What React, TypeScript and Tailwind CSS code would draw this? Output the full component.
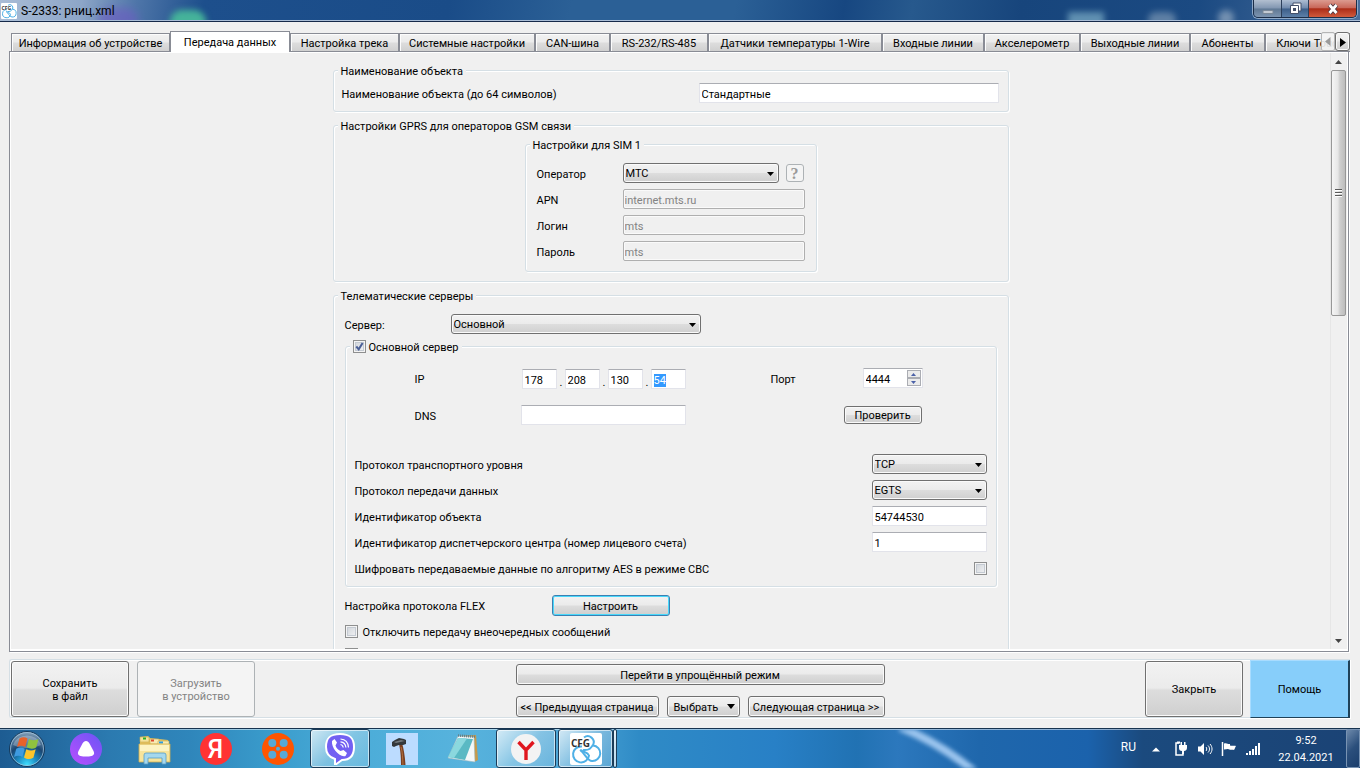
import { useEffect, useRef, type ReactNode } from "react";

const tabs = [
  { label: "Информация об устройстве", width: "w-[159px]" },
  { label: "Передача данных", width: "w-[120px]", active: true },
  { label: "Настройка трека", width: "w-[109px]" },
  { label: "Системные настройки", width: "w-[136px]" },
  { label: "CAN-шина", width: "w-[75px]" },
  { label: "RS-232/RS-485", width: "w-[98px]" },
  { label: "Датчики температуры 1-Wire", width: "w-[174px]" },
  { label: "Входные линии", width: "w-[102px]" },
  { label: "Акселерометр", width: "w-[96px]" },
  { label: "Выходные линии", width: "w-[110px]" },
  { label: "Абоненты", width: "w-[75px]" },
  { label: "Ключи Touch", width: "w-[90px]" },
];

const face =
  "border border-[#707070] rounded-[3px] bg-[linear-gradient(#f2f2f2,#ebebeb_48%,#dddddd_52%,#cfcfcf)] pt-[2px] shadow-[inset_0_0_0_1px_#fafafa]";
const field =
  "h-5 min-w-0 rounded-[1px] border border-[#e2e3ea] border-t-[#abadb3] bg-white px-[2px] pt-[2px] outline-none selection:bg-[#3399ff] selection:text-white";
const group =
  "min-w-0 rounded-[3px] border border-[#d5dfe5] shadow-[1px_1px_0_#fff,inset_1px_1px_0_#fff]";

function Group({ title, className, children }: { title: ReactNode; className: string; children: ReactNode }) {
  return (
    <fieldset className={`${group} ${className}`}>
      <legend className="ml-1 flex h-[14px] items-center bg-[#f0f0f0] px-[3px] leading-[14px]">
        {typeof title === "string" ? <span className="pt-[3px]">{title}</span> : title}
      </legend>
      {children}
    </fieldset>
  );
}

function Select({ id, value, className }: { id: string; value: string; className: string }) {
  return (
    <div className={`relative ${className}`}>
      <select id={id} className={`block h-5 w-full appearance-none pl-[2px] outline-none ${face}`}>
        <option>{value}</option>
      </select>
      <svg className="pointer-events-none absolute top-[9px] right-[5px] h-1 w-[7px]" viewBox="0 0 7 4">
        <path d="M0 0h7L3.500 4z" fill="#000" />
      </svg>
    </div>
  );
}

function Check({ id, checked }: { id: string; checked?: boolean }) {
  return (
    <span className="relative block size-[13px] shrink-0">
      <input
        id={id}
        type="checkbox"
        defaultChecked={checked}
        className="block size-[13px] appearance-none border border-[#8e8f8f] bg-[linear-gradient(135deg,#cdd2d8,#f4f4f5)] shadow-[inset_0_0_0_1px_#f4f4f4,inset_0_0_0_2px_#c4cad2]"
      />
      {checked && (
        <svg className="pointer-events-none absolute inset-0" viewBox="0 0 13 13">
          <path d="M3.300 6.500 5.700 9.300 9.600 2.900" fill="none" stroke="#4a5f97" strokeWidth="2" />
        </svg>
      )}
    </span>
  );
}

function Server() {
  const lastOctet = useRef<HTMLInputElement>(null);
  useEffect(() => {
    lastOctet.current?.focus();
    lastOctet.current?.select();
  }, []);
  return (
    <Group
      className="mx-[11px] mt-[5px]"
      title={
        <>
          <Check id="main-server" checked />
          <label htmlFor="main-server" className="ml-[3px]">Основной сервер</label>
        </>
      }
    >
      <div className="pr-[9px] pb-2 pl-[9px]">
        <div className="mt-[15px] flex items-center pl-[60px]">
          <span className="w-[107px] pt-[3px]">IP</span>
          <div className="flex items-end pt-px">
            {["178", "208", "130", "54"].map((octet, i) => (
              <div key={i} className="flex items-end">
                <input
                  ref={i === 3 ? lastOctet : undefined}
                  aria-label={`Октет ${i + 1}`}
                  defaultValue={octet}
                  className={`w-[35px] ${field}`}
                />
                {i < 3 && <span className="w-2 pl-[3px] leading-3">.</span>}
              </div>
            ))}
          </div>
          <label htmlFor="port" className="ml-[85px] w-[92px]">Порт</label>
          <div className="relative self-start">
            <input id="port" defaultValue="4444" className={`block w-[60px] ${field}`} />
            <div className="absolute top-[2px] right-[2px] flex flex-col">
              <button aria-label="Увеличить" className="grid h-2 w-[14px] place-items-center border border-[#abadb3] bg-[#ebebeb]">
                <svg width="5" height="3" viewBox="0 0 5 3"><path d="M0 3h5L2.500 0z" fill="#4b61a8" /></svg>
              </button>
              <button aria-label="Уменьшить" className="grid h-2 w-[14px] place-items-center border border-[#abadb3] bg-[#ebebeb]">
                <svg width="5" height="3" viewBox="0 0 5 3"><path d="M0 0h5L2.500 3z" fill="#4b61a8" /></svg>
              </button>
            </div>
          </div>
        </div>
        <div className="mt-4 flex items-center pl-[60px]">
          <label htmlFor="dns" className="w-[106px]">DNS</label>
          <input id="dns" className={`w-[165px] ${field}`} />
          <button className={`ml-[158px] h-[18px] w-[78px] leading-[14px] ${face}`}>Проверить</button>
        </div>
        <div className="mt-[29px] flex flex-col gap-[6px]">
          <div className="flex items-center justify-between">
            <label htmlFor="transport">Протокол транспортного уровня</label>
            <Select id="transport" value="TCP" className="w-[115px]" />
          </div>
          <div className="flex items-center justify-between">
            <label htmlFor="data-protocol">Протокол передачи данных</label>
            <Select id="data-protocol" value="EGTS" className="w-[115px]" />
          </div>
          <div className="flex items-center justify-between">
            <label htmlFor="object-id">Идентификатор объекта</label>
            <input id="object-id" defaultValue="54744530" className={`w-[115px] ${field}`} />
          </div>
          <div className="flex items-center justify-between">
            <label htmlFor="center-id">Идентификатор диспетчерского центра (номер лицевого счета)</label>
            <input id="center-id" defaultValue="1" className={`w-[115px] ${field}`} />
          </div>
          <div className="flex h-5 items-center justify-between">
            <label htmlFor="aes">Шифровать передаваемые данные по алгоритму AES в режиме CBC</label>
            <Check id="aes" />
          </div>
        </div>
      </div>
    </Group>
  );
}

function TitleBar() {
  return (
    <header className="relative flex h-[22px] shrink-0 items-center overflow-hidden border-b border-[#16294a] bg-[linear-gradient(100deg,#a9bcd6_0,#8da6c8_6%,#4f76a9_10%,#1d4f8c_15%,#1a4c88_33%,#2b6096_42%,#2b6096_54%,#174781_62%,#27598d_67%,#17457c_75%,#1b4a82_88%,#4a6f9c_100%)] pl-px">
      <span className="absolute top-2 left-[98px] h-6 w-10 rounded-full bg-[#6a5fc0] opacity-70 blur-[4px]" />
      <span className="absolute top-[10px] left-[170px] h-6 w-9 rounded-full bg-[#45b39a] blur-[3px]" />
      <span className="absolute top-3 left-[1068px] h-4 w-9 bg-[#7fb0c8] opacity-70 blur-[3px]" />
      <span className="absolute top-3 left-[1148px] h-4 w-7 rounded-full bg-[#8ba4bd] opacity-60 blur-[3px]" />
      <span className="absolute top-[10px] left-[1218px] h-4 w-4 rounded-full bg-[#a9bbcd] opacity-60 blur-[3px]" />
      <svg className="relative size-4 rounded-[1px] bg-white" viewBox="0 0 32 32"><CfgMark /></svg>
      <h1 className="relative ml-1 text-[12px] leading-4 text-black">S-2333: рниц.xml</h1>
      <div className="relative ml-auto mr-[3px] flex h-[18px] self-start overflow-hidden rounded-b-[5px] border border-t-0 border-[#1c2e48] shadow-[0_0_0_1px_#8fa9c8]">
        <button aria-label="Свернуть" className="grid w-7 place-items-center border-r border-[#2c3f5b] bg-[linear-gradient(#b2bfd0,#8196b1_48%,#5f7894_52%,#7d94b0)]">
          <svg width="12" height="14" viewBox="0 0 12 14"><path d="M1 8.500h10v3H1z" fill="#c3cad3" stroke="#7b8898" /></svg>
        </button>
        <button aria-label="Восстановить" className="grid w-[27px] place-items-center border-r border-[#2c3f5b] bg-[linear-gradient(#aebed3,#6f89ac_48%,#3c5e89_52%,#5c7fa8)]">
          <svg width="13" height="13" viewBox="0 0 13 13">
            <path d="M4 1h8v8H4z" fill="#fff" stroke="#44506a" />
            <path d="M1.500 3.500h8v8h-8z" fill="#fff" stroke="#44506a" />
            <path d="M4 6h3v3H4z" fill="#44506a" />
          </svg>
        </button>
        <button aria-label="Закрыть окно" className="grid w-[47px] place-items-center bg-[linear-gradient(#dc9b90,#c9685a_45%,#ac2d18_52%,#d15a3c)]">
          <svg width="14" height="12" viewBox="0 0 14 12">
            <path d="M3.500 2l7 8m0-8l-7 8" stroke="#4c3742" strokeWidth="4.600" />
            <path d="M3.500 2l7 8m0-8l-7 8" stroke="#fff" strokeWidth="2.800" />
          </svg>
        </button>
      </div>
      <span className="absolute inset-x-0 bottom-0 h-px bg-[#a9bdd6]" />
    </header>
  );
}

function CfgMark() {
  return (
    <>
      <g fill="none" stroke="#4fb0e6" strokeWidth="2">
        <path d="M14 4.500a6 6 0 019 7.500M23 12.500a6 6 0 11-1 15.500c-5 0-7-8-12-11" />
        <path d="M12 13.500a8 8 0 107 9c-1.500-4-7-3-8-6" />
        <path d="M23 11.500c-2 5-6 6-10 5.500" />
      </g>
      <text x="1" y="14" fontSize="10" fontWeight="bold" fill="#333" fontFamily="Open Sans, sans-serif">CFG</text>
    </>
  );
}

function Tabs() {
  return (
    <div className="relative z-10 -mb-px flex h-[21px] shrink-0">
      <div role="tablist" className="flex min-w-0 flex-1 items-end overflow-hidden pl-[2px]">
        {tabs.map((t) =>
          t.active ? (
            <button key={t.label} role="tab" aria-selected className={`h-[21px] shrink-0 border border-b-0 border-[#898c95] bg-white pt-px whitespace-nowrap ${t.width}`}>
              {t.label}
            </button>
          ) : (
            <button key={t.label} role="tab" className={`h-[19px] shrink-0 border border-[#898c95] bg-[linear-gradient(#f2f2f2,#ebebeb_48%,#dddddd_52%,#d0d0d0)] pt-[2px] whitespace-nowrap shadow-[inset_1px_1px_0_#fcfcfc] ${t.width}`}>
              {t.label}
            </button>
          ),
        )}
      </div>
      <div className="absolute top-px right-0 flex h-[19px]">
        <button aria-label="Вкладки влево" disabled className="grid w-[14px] place-items-center rounded-[2px] border border-[#b5b5b5] bg-[#f4f4f4]/90">
          <svg width="6" height="9" viewBox="0 0 6 9"><path d="M5.500 0v9L0 4.500z" fill="#9b9b9b" /></svg>
        </button>
        <button aria-label="Вкладки вправо" className={`grid w-[15px] place-items-center ${face}`}>
          <svg width="6" height="9" viewBox="0 0 6 9"><path d="M0 0v9l6-4.500z" fill="#000" /></svg>
        </button>
      </div>
    </div>
  );
}

function ScrollBar() {
  return (
    <div className="flex w-[17px] shrink-0 flex-col items-center border-l border-[#e6e6e6] bg-[#f0f0f0] pr-px">
      <button aria-label="Прокрутить вверх" className="grid h-[17px] w-full place-items-center">
        <svg width="7" height="4" viewBox="0 0 7 4"><path d="M0 4h7L3.500 0z" fill="#444" /></svg>
      </button>
      <div className="grid h-[246px] w-[15px] place-items-center rounded-[2px] border border-[#979797] bg-[linear-gradient(90deg,#f5f5f5,#e6e6e6_45%,#cfcfcf_60%,#bdbdbd)]">
        <svg width="7" height="8" viewBox="0 0 7 8">
          <path d="M0 .5h7M0 3.500h7M0 6.500h7" stroke="#5a5a5a" />
          <path d="M0 1.500h7M0 4.500h7M0 7.500h7" stroke="#fff" />
        </svg>
      </div>
      <button aria-label="Прокрутить вниз" className="mt-auto grid h-[17px] w-full place-items-center">
        <svg width="7" height="4" viewBox="0 0 7 4"><path d="M0 0h7L3.500 4z" fill="#444" /></svg>
      </button>
    </div>
  );
}

function SettingsPane() {
  return (
    <div className="mr-px flex min-h-0 flex-1 border border-[#898c95] shadow-[1px_1px_0_#fff]">
      <div className="flex min-h-0 flex-1 border border-b-2 border-white">
        <div className="min-w-0 flex-1 overflow-hidden">
          <div className="mx-auto mt-[10px] max-w-[676px] [&_label]:pt-[3px]">
            <Group title="Наименование объекта" className="">
              <div className="mt-[6px] flex items-center justify-between pr-[9px] pb-2 pl-2">
                <label htmlFor="object-name">Наименование объекта (до 64 символов)</label>
                <input id="object-name" defaultValue="Стандартные" className={`w-[300px] ${field}`} />
              </div>
            </Group>

            <Group title="Настройки GPRS для операторов GSM связи" className="mt-[6px] pb-[9px]">
              <Group title="Настройки для SIM 1" className="mx-auto mt-[5px] w-[292px]">
                <div className="mt-3 flex flex-col gap-[6px] px-[11px] pb-[10px]">
                  <div className="flex items-center">
                    <label htmlFor="operator" className="w-[86px]">Оператор</label>
                    <Select id="operator" value="МТС" className="w-[156px]" />
                    <button disabled aria-label="Справка" className="ml-[7px] size-[18px] rounded-[3px] border border-[#adb2b5] bg-[#f4f4f4] font-['Liberation_Serif',serif] text-[16px] leading-[15px] font-bold text-[#9a9a9a]">?</button>
                  </div>
                  {[
                    ["apn", "APN", "internet.mts.ru"],
                    ["login", "Логин", "mts"],
                    ["password", "Пароль", "mts"],
                  ].map(([id, label, value]) => (
                    <div key={id} className="flex items-center">
                      <label htmlFor={id} className="w-[86px]">{label}</label>
                      <input id={id} disabled defaultValue={value} className="h-5 min-w-0 flex-1 rounded-[2px] border border-[#afafaf] bg-[#f0f0f0] px-px pt-[2px] text-[#838383] shadow-[inset_0_0_0_1px_#fafafa]" />
                    </div>
                  ))}
                </div>
              </Group>
            </Group>

            <Group title="Телематические серверы" className="mt-[6px] pb-4">
              <div className="mt-3 flex items-center pl-[11px]">
                <label htmlFor="server" className="w-[106px]">Сервер:</label>
                <Select id="server" value="Основной" className="w-[250px]" />
              </div>
              <Server />
              <div className="mt-2 flex items-center pl-[11px]">
                <span className="w-[207px] pt-[2px]">Настройка протокола FLEX</span>
                <button className="h-[21px] w-[118px] rounded-[3px] border border-[#3c7fb1] bg-[linear-gradient(#f2f2f2,#ebebeb_48%,#dddddd_52%,#cfcfcf)] pt-[2px] shadow-[inset_0_0_0_1px_#48d8fb]">
                  Настроить
                </button>
              </div>
              <div className="mt-[9px] flex flex-col gap-[10px] pl-[11px]">
                <div className="flex h-[13px] items-center gap-[5px]">
                  <Check id="no-extra" />
                  <label htmlFor="no-extra">Отключить передачу внеочередных сообщений</label>
                </div>
                <Check id="extra-option" />
              </div>
            </Group>
          </div>
        </div>
        <ScrollBar />
      </div>
    </div>
  );
}

function BottomBar() {
  return (
    <div className="mt-[7px] flex h-[59px] shrink-0 items-center justify-between rounded-l-[3px] border border-r-0 border-[#d5dfe5] pl-px shadow-[1px_1px_0_#fff,inset_1px_1px_0_#fff]">
      <div className="flex gap-2">
        <button className={`h-14 w-[118px] leading-[13px] ${face}`}>Сохранить<br />в файл</button>
        <button disabled className="h-14 w-[118px] rounded-[3px] border border-[#adb2b5] bg-[#f4f4f4] pt-[2px] leading-[13px] text-[#838383]">Загрузить<br />в устройство</button>
      </div>
      <div className="flex w-[369px] flex-col gap-[11px] pt-1">
        <button className={`h-[21px] ${face}`}>Перейти в упрощённый режим</button>
        <div className="flex justify-between">
          <button className={`h-[21px] w-[143px] whitespace-nowrap ${face}`}>&lt;&lt; Предыдущая страница</button>
          <button className={`flex h-[21px] w-[73px] items-center justify-between pr-1 pl-[6px] ${face}`}>
            Выбрать
            <svg className="mb-[2px]" width="8" height="5" viewBox="0 0 8 5"><path d="M0 0h8L4 5z" fill="#000" /></svg>
          </button>
          <button className={`h-[21px] w-[137px] whitespace-nowrap ${face}`}>Следующая страница &gt;&gt;</button>
        </div>
      </div>
      <div className="flex items-center gap-[7px]">
        <button className={`h-14 w-[98px] ${face}`}>Закрыть</button>
        <button className="h-[58px] w-[100px] border border-t-[#a8dcff] border-r-2 border-b-[#1f4258] border-l-[#a8dcff] border-r-[#1f4258] bg-[#87cefa] pt-[2px]">Помощь</button>
      </div>
    </div>
  );
}

function TaskBar() {
  const open = "border border-[#1c3c58] bg-[linear-gradient(135deg,rgba(255,255,255,.75),rgba(255,255,255,.3)_50%,rgba(255,255,255,.15))] shadow-[inset_0_0_0_1px_rgba(255,255,255,.6)] rounded-[3px]";
  return (
    <footer className="relative flex h-10 shrink-0 items-center overflow-hidden border-t border-[#17334f] bg-[linear-gradient(90deg,#1d5c92_0,#2b7ab0_8%,#2f86bb_14%,#3a9ccc_20%,#4bacd8_26%,#57b3dd_34%,#4da5d6_42%,#2f8bc6_47%,#2880c6_57%,#2172b3_63%,#2c78bd_66%,#1f67ac_72%,#1b62ac_80%,#1b4a7e_84%,#1b4375_100%)] text-white shadow-[inset_0_1px_0_rgba(255,255,255,.5)]">
      <svg className="absolute top-0 left-[880px] blur-[2px]" width="110" height="40" viewBox="0 0 110 40">
        <path d="M20 -2Q60 14 96 44" fill="none" stroke="#9cc5ee" strokeWidth="8" />
      </svg>
      <button aria-label="Пуск" className="ml-2 shrink-0">
        <svg width="38" height="38" viewBox="0 0 38 38">
          <defs>
            <radialGradient id="orb" cx=".5" cy=".95" r=".95">
              <stop offset="0" stopColor="#3fe0ff" /><stop offset=".3" stopColor="#1c8cc4" /><stop offset=".6" stopColor="#1a4672" /><stop offset="1" stopColor="#8ba6bd" />
            </radialGradient>
          </defs>
          <circle cx="19" cy="19" r="17.500" fill="url(#orb)" stroke="#15395b" />
          <circle cx="19" cy="19" r="16.500" fill="none" stroke="#a4c8df" strokeOpacity=".7" />
          <path d="M5 15a14.500 13 0 0128 0c-8 4-20 4-28 0z" fill="#fff" fillOpacity=".28" />
          <path d="M11.500 8.500c2.800-1.800 5.500-1.700 8 0l-2.300 8.500c-3-1.600-5.500-1.600-8.200 0z" fill="#e8622a" />
          <path d="M21 9c3 1.600 6 1.700 9.500 0l-2.300 8.500c-3.300 1.700-6 1.500-9.400-.2z" fill="#8fc33f" />
          <path d="M8.300 18.700c3-1.700 5.500-1.700 8.400 0l-2.300 8.300c-2.800-1.600-5.400-1.700-8.400 0z" fill="#3f9be0" />
          <path d="M18.300 19.200c3.300 1.700 6 1.700 9.400.1l-2.300 8.400c-3.500 1.700-6.200 1.600-9.400-.3z" fill="#fcc52c" />
        </svg>
      </button>
      <button aria-label="Алиса" className="ml-6 shrink-0">
        <svg width="32" height="32" viewBox="0 0 32 32">
          <defs><linearGradient id="alice" x1="0" y1="1" x2="1" y2="0"><stop stopColor="#b94fff" /><stop offset="1" stopColor="#6a55f5" /></linearGradient></defs>
          <circle cx="16" cy="16" r="16" fill="url(#alice)" />
          <path d="M16 8c1.600 0 2.600 1 3.500 2.500l4 7.500c1.300 2.800.3 4.300-2 4.900-3.500.9-7.500.9-11 0-2.300-.6-3.300-2.100-2-4.900l4-7.500C13.400 9 14.400 8 16 8z" fill="#fff" />
        </svg>
      </button>
      <button aria-label="Проводник" className="ml-9 shrink-0">
        <svg width="34" height="32" viewBox="0 0 34 32">
          <path d="M2 4l8-1 2 2 18 2v22H2z" fill="#e6c563" />
          <path d="M2 4h9v5H2z" fill="#f4e29a" stroke="#c9a748" strokeWidth=".6" />
          <path d="M12 6h9v5h-9z" fill="#f8ebb4" stroke="#c9a748" strokeWidth=".6" />
          <path d="M20 8h11v5H20z" fill="#f8ebb4" stroke="#c9a748" strokeWidth=".6" />
          <path d="M5 4.500h3v2H5z" fill="#2bae2b" /><path d="M13 6.500h3v2h-3z" fill="#e0482c" /><path d="M21 8.500h4v2h-4z" fill="#2b9be0" />
          <path d="M1 11h31v18H1z" fill="#f7e49b" stroke="#d2ae50" strokeWidth=".8" />
          <path d="M2 12h29v6H2z" fill="#fdf3c2" />
          <path d="M6 31V22q0-2 2-2h18q2 0 2 2v9h-4v-6H10v6z" fill="#a5d8ee" stroke="#579dc4" strokeWidth=".8" />
        </svg>
      </button>
      <button aria-label="Яндекс" className="ml-7 shrink-0">
        <svg width="32" height="32" viewBox="0 0 32 32">
          <circle cx="16" cy="16" r="16" fill="#ff3333" />
          <text x="15.500" y="25" textAnchor="middle" fontSize="25" fontWeight="500" fill="#fff" fontFamily="Roboto, sans-serif">Я</text>
        </svg>
      </button>
      <button aria-label="Видео" className="ml-[30px] shrink-0">
        <svg width="32" height="32" viewBox="0 0 32 32">
          <circle cx="16" cy="16" r="16" fill="#ff5500" />
          <g fill="#57a9d6"><circle cx="10.300" cy="10" r="4" /><circle cx="21.700" cy="10" r="4" /><circle cx="10.300" cy="21.700" r="4" /><circle cx="21.700" cy="21.700" r="4" /><circle cx="16" cy="15.800" r="2" /></g>
        </svg>
      </button>
      <button aria-label="Viber" className={`ml-4 grid h-[39px] w-[60px] shrink-0 place-items-center ${open}`}>
        <svg width="32" height="32" viewBox="0 0 32 32">
          <path d="M16 1c10 0 14 4 14 13s-4 13-12 13l-7 5v-6C4 24 2 20 2 14 2 5 6 1 16 1z" fill="#7360f2" stroke="#fff" strokeWidth="2" />
          <path d="M8 8l2.500-2L13 9.500 11.500 12.500c.6 2.400 2.700 4.600 5 5.500L19.500 17l3.500 3-1.500 3C16 25 7 15 8 8z" fill="#fff" />
          <path d="M16.500 11.500c1.700.3 2.500 1.300 2.700 3M16.500 8.800c3.300.3 5.100 2.300 5.400 5.700M16.500 6c5 .3 7.700 3.500 8 8.500" fill="none" stroke="#fff" strokeWidth="1.200" />
        </svg>
      </button>
      <button aria-label="Инструмент" className="ml-4 shrink-0">
        <svg width="32" height="32" viewBox="0 0 32 32" className="bg-[#bcdcff]">
          <path d="M13 11l3-1c2 7 3 14 3.500 22h-4.500c0-9-.5-14-2-21z" fill="#7a4023" />
          <path d="M15 14c1.500 5 1.700 11 2 18" fill="none" stroke="#b4713f" />
          <path d="M6 9l3-2 4-2 5 1 2 1v4l-3 1-4 0-3 1-2 1-2-1z" fill="#34383b" /><path d="M8 9l7-2 4 1-9 2z" fill="#73797d" />
        </svg>
      </button>
      <button aria-label="Блокнот" className="ml-7 shrink-0">
        <svg width="34" height="32" viewBox="0 0 34 32">
          <path d="M13 3l17-1 2 25-4 2z" fill="#c69a4b" />
          <path d="M12 3l16 1 1 25-27-4z" fill="#f4f8f9" stroke="#9bb7c0" strokeWidth=".6" />
          <path d="M12 5l15 1-8 21L2 24z" fill="#5ab9c4" /><path d="M12 5l9 .6L8 25l-6-1z" fill="#8bd8de" />
          <path d="M12 2.500l17 1.200" stroke="#65808a" strokeWidth="2.500" strokeDasharray="1 1" />
        </svg>
      </button>
      <button aria-label="Яндекс Браузер" className={`ml-4 grid h-[39px] w-[60px] shrink-0 place-items-center ${open}`}>
        <svg width="30" height="30" viewBox="0 0 30 30">
          <circle cx="15" cy="15" r="15" fill="#f3f3f3" />
          <path d="M7.500 8l7.500 8v10M22.500 8L15 16" fill="none" stroke="#e0161e" strokeWidth="3.400" />
        </svg>
      </button>
      <button aria-label="CFG" className={`ml-[2px] grid h-[39px] w-[55px] shrink-0 place-items-center ${open}`}>
        <svg width="32" height="32" viewBox="0 0 32 32" className="rounded-[2px] bg-white"><CfgMark /></svg>
      </button>
      <span className={`h-[39px] w-1 shrink-0 ${open}`} />
      <div className="ml-auto flex shrink-0 items-center">
        <span className="mb-1 text-[12px] leading-4">RU</span>
        <svg className="ml-4 mt-[2px]" width="8" height="5" viewBox="0 0 8 5"><path d="M0 4.500h8L4 .5z" fill="#fff" /></svg>
        <svg className="ml-[13px]" width="16" height="16" viewBox="0 0 16 16">
          <path d="M6 2H3v12h7v-3" fill="none" stroke="#fff" strokeWidth="1.500" /><path d="M4 .5h3v2H4z" fill="#fff" />
          <path d="M6 4h8v3c0 2-1.500 3-3 3v3H9v-3c-2 0-3-1-3-3zM7.500 1h1.500v3H7.500zM11 1h1.500v3H11z" fill="#fff" />
        </svg>
        <svg className="ml-2" width="16" height="16" viewBox="0 0 16 16">
          <path d="M1 5.500h2.500L7 2v12l-3.500-3.500H1z" fill="#fff" />
          <path d="M9 6c1 1 1 3 0 4M11 4.500c2 2 2 5 0 7M13 3c2.700 3 2.700 7 0 10" fill="none" stroke="#fff" />
        </svg>
        <svg className="ml-2" width="16" height="16" viewBox="0 0 16 16">
          <path d="M1.500 1v14" stroke="#fff" strokeWidth="1.500" /><path d="M3 2.500c3-1 4 1 6 .5v1.500c2 1 4-.5 6 .5-1 1-1 3-2 4-2-1-3 .5-4.500-.5-1-1-3-.5-5.500 0z" fill="#fff" />
        </svg>
        <svg className="ml-2" width="16" height="14" viewBox="0 0 16 14">
          <path d="M1 11h2v2H1zM4 9h2v4H4zM7 7h2v6H7zM10 4h2v9h-2zM13 1h2v12h-2z" fill="#fff" />
        </svg>
        <div className="ml-[17px] w-[56px] pt-px text-center text-[11px] leading-[17px]">9:52<br />22.04.2021</div>
        <button aria-label="Свернуть все окна" className="ml-3 h-[39px] w-[14px] rounded-[2px] border border-[#7893b3] bg-[linear-gradient(135deg,#6d89ab,#2b4f7c_50%,#1b3e6c)]" />
      </div>
    </footer>
  );
}

export default function App() {
  return (
    <div className="flex h-screen flex-col overflow-hidden bg-[#f0f0f0] font-['Roboto','Noto_Sans',sans-serif] text-[11px] leading-[14px] text-black">
      <TitleBar />
      <main className="flex min-h-0 flex-1 flex-col pt-[9px] pr-[10px] pb-[10px] pl-[9px]">
        <Tabs />
        <SettingsPane />
        <BottomBar />
      </main>
      <TaskBar />
    </div>
  );
}
